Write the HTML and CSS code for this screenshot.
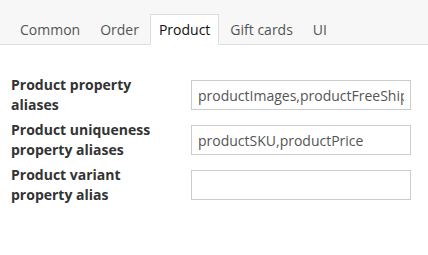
FILE: index.html
```html
<!DOCTYPE html>
<html lang="en">
<head>
    <meta charset="UTF-8">
    <meta name="viewport" content="width=device-width, initial-scale=1.0">
    <title>Settings</title>
    <link rel="stylesheet" href="styles.css">
</head>
<body>
    <ul class="tabs">
        <li class="tab">Common</li>
        <li class="tab">Order</li>
        <li class="tab active">Product</li>
        <li class="tab">Gift cards</li>
        <li class="tab">UI</li>
    </ul>

    <form class="settings">
        <label class="field-label" for="aliases">Product property aliases</label>
        <input class="field-input" type="text" id="aliases" value="productImages,productFreeShipping">

        <label class="field-label" for="unique">Product uniqueness property aliases</label>
        <input class="field-input" type="text" id="unique" value="productSKU,productPrice">

        <label class="field-label" for="variant">Product variant property alias</label>
        <input class="field-input" type="text" id="variant" value="">
    </form>
</body>
</html>
```

FILE: styles.css
```css
* {
  box-sizing: border-box;
}

body {
  margin: 0;
  font-family: "Open Sans", sans-serif;
  font-size: 14px;
  color: #333;
  background-color: #fff;
}

.tabs {
  display: flex;
  list-style: none;
  margin: 0;
  padding: 14px 0 0 11px;
  background-color: #f7f7f7;
  border-bottom: 1px solid #ddd;
}

.tab {
  padding: 0 8px;
  margin-right: 2px;
  margin-bottom: -1px;
  line-height: 29px;
  border: 1px solid transparent;
  color: #555;
}

.tab.active {
  background-color: #fff;
  border-color: #ddd;
  border-bottom-color: #fff;
  color: #111;
}

.settings {
  display: grid;
  grid-template-columns: 180px 220px;
  row-gap: 5px;
  align-items: center;
  padding: 30px 0 0 11px;
}

.field-label {
  max-width: 150px;
  font-weight: bold;
  line-height: 20px;
  color: #333;
}

.field-input {
  width: 220px;
  height: 30px;
  padding: 0 6px;
  border: 1px solid #ccc;
  border-radius: 0;
  font-family: "Open Sans", sans-serif;
  font-size: 14px;
  color: #555;
  background-color: #fff;
}
```
